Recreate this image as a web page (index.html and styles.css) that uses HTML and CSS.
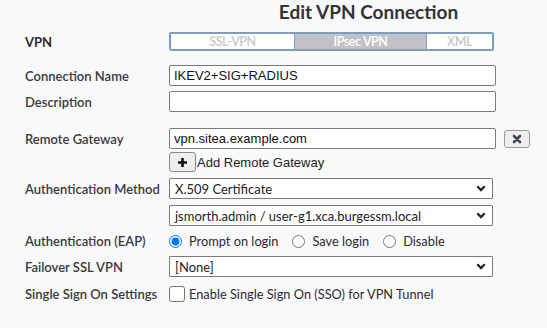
FILE: index.html
```html
<!doctype html>
<html lang="en">
  <head>
    <meta charset="UTF-8" />
    <meta name="viewport" content="width=device-width, initial-scale=1.0" />
    <title>Edit VPN Connection</title>
    <link rel="stylesheet" href="styles.css">
  </head>
  <body>
    <div class="page">
      <h1 class="title">Edit VPN Connection</h1>

      <div class="row row-vpn">
        <div class="label label-strong">VPN</div>
        <div class="segments">
          <span class="seg seg-ssl">SSL-VPN</span>
          <span class="seg seg-ipsec active">IPsec VPN</span>
          <span class="seg seg-xml">XML</span>
        </div>
      </div>

      <div class="row row-name">
        <div class="label">Connection Name</div>
        <input type="text" class="text-input" value="IKEV2+SIG+RADIUS" aria-label="Connection Name" />
      </div>

      <div class="row row-desc">
        <div class="label">Description</div>
        <input type="text" class="text-input" value="" aria-label="Description" />
      </div>

      <div class="row row-gateway">
        <div class="label">Remote Gateway</div>
        <div class="gateway">
          <input type="text" class="text-input" value="vpn.sitea.example.com" aria-label="Remote Gateway" />
          <button class="icon-btn remove-btn" aria-label="Remove">
            <svg width="10" height="10" viewBox="0 0 10 10">
              <path d="M2 2 L8 8 M8 2 L2 8" stroke="#3d4552" stroke-width="2.6" stroke-linecap="round" />
            </svg>
          </button>
        </div>
      </div>

      <div class="row row-add">
        <div class="label"></div>
        <div class="add-line">
          <button class="icon-btn add-btn" aria-label="Add">
            <svg width="11" height="11" viewBox="0 0 11 11">
              <path d="M5.5 1 V10 M1 5.5 H10" stroke="#111" stroke-width="2.6" />
            </svg>
          </button>
          <span class="add-text">Add Remote Gateway</span>
        </div>
      </div>

      <div class="row row-auth">
        <div class="label">Authentication Method</div>
        <div class="select">
          <span>X.509 Certificate</span>
          <svg class="chevron" width="10" height="7" viewBox="0 0 10 7">
            <path d="M1.3 1.3 L5 5 L8.7 1.3" fill="none" stroke="#222" stroke-width="2.3" />
          </svg>
        </div>
      </div>

      <div class="row row-cert">
        <div class="label"></div>
        <div class="select">
          <span>jsmorth.admin / user-g1.xca.burgessm.local</span>
          <svg class="chevron" width="10" height="7" viewBox="0 0 10 7">
            <path d="M1.3 1.3 L5 5 L8.7 1.3" fill="none" stroke="#222" stroke-width="2.3" />
          </svg>
        </div>
      </div>

      <div class="row row-eap">
        <div class="label">Authentication (EAP)</div>
        <div class="radios">
          <label class="radio"><input type="radio" name="eap" checked /> Prompt on login</label>
          <label class="radio"><input type="radio" name="eap" /> Save login</label>
          <label class="radio"><input type="radio" name="eap" /> Disable</label>
        </div>
      </div>

      <div class="row row-failover">
        <div class="label">Failover SSL VPN</div>
        <div class="select">
          <span>[None]</span>
          <svg class="chevron" width="10" height="7" viewBox="0 0 10 7">
            <path d="M1.3 1.3 L5 5 L8.7 1.3" fill="none" stroke="#222" stroke-width="2.3" />
          </svg>
        </div>
      </div>

      <div class="row row-sso">
        <div class="label">Single Sign On Settings</div>
        <label class="check"><input type="checkbox" /> Enable Single Sign On (SSO) for VPN Tunnel</label>
      </div>
    </div>
  </body>
</html>
```

FILE: styles.css
```css
body {
  margin: 0;
  background: #f8f9fb;
  font-family: Lato, 'Liberation Sans', sans-serif;
  color: #333;
  font-size: 13px;
}
.page {
  width: 547px;
  height: 328px;
  overflow: hidden;
}
.title {
  margin: 0 0 0 190px;
  font-size: 19px;
  line-height: 23px;
  font-weight: bold;
  text-align: center;
  color: #333;
}
.row {
  display: grid;
  grid-template-columns: 144px 1fr;
  align-items: center;
  padding-left: 25px;
}
.label {
  font-weight: 600;
  color: #3a3a3a;
  line-height: 16px;
}
.label-strong {
  font-weight: bold;
  color: #2a2a2a;
}
.row-vpn {
  margin-top: 9px;
}
.row-name {
  margin-top: 14px;
}
.row-desc {
  margin-top: 5px;
}
.row-gateway {
  margin-top: 16px;
}
.row-add {
  margin-top: 3px;
}
.row-auth {
  margin-top: 6px;
}
.row-cert {
  margin-top: 6px;
}
.row-eap {
  margin-top: 7px;
}
.row-failover {
  margin-top: 7px;
}
.row-sso {
  margin-top: 9px;
}
.segments {
  display: flex;
  width: 325px;
  height: 19px;
  box-sizing: border-box;
  border: 2px solid #7f9dbf;
  border-radius: 2px;
  background: #fff;
  font-weight: 600;
  font-size: 12.5px;
  letter-spacing: -0.4px;
}
.seg {
  display: flex;
  align-items: center;
  justify-content: center;
  color: #c8c8c8;
}
.seg-ssl {
  width: 123px;
  border-right: 1px solid #7f9dbf;
}
.seg-ipsec {
  width: 131px;
}
.seg-xml {
  flex: 1;
  border-left: 1px solid #7f9dbf;
}
.active {
  background: #c2c2c6;
  color: #fff;
}
.text-input {
  width: 327px;
  height: 21px;
  box-sizing: border-box;
  margin: 0;
  padding: 0 4px;
  border: 1px solid #7a7a7a;
  border-radius: 2px;
  background: #fff;
  font-family: 'Liberation Sans', Arial, sans-serif;
  font-size: 13px;
  color: #111;
}
.gateway {
  display: flex;
  align-items: center;
  gap: 8px;
}
.icon-btn {
  display: flex;
  align-items: center;
  justify-content: center;
  padding: 0;
  margin: 0;
  box-sizing: border-box;
  border: 1px solid #9a9a9a;
  border-radius: 3px;
  background: #eeeeee;
}
.remove-btn {
  width: 26px;
  height: 18px;
}
.add-btn {
  width: 27px;
  height: 20px;
  border-color: #8a8a8a;
}
.add-line {
  display: flex;
  align-items: center;
  gap: 1px;
}
.add-text {
  font-family: 'Liberation Sans', Arial, sans-serif;
  font-size: 13px;
  color: #222;
}
.select {
  display: flex;
  align-items: center;
  justify-content: space-between;
  width: 324px;
  height: 21px;
  box-sizing: border-box;
  padding: 0 6px 0 5px;
  border: 1px solid #7a7a7a;
  border-radius: 1px;
  background: #fff;
  color: #222;
}
.radios {
  display: flex;
  align-items: center;
  height: 16px;
}
.radio {
  display: flex;
  align-items: center;
  gap: 7px;
  margin-right: 14px;
  color: #2e2a33;
  font-size: 12.8px;
}
.radio input {
  margin: 0 0 0 0;
  width: 13px;
  height: 13px;
}
.check {
  display: flex;
  align-items: center;
  gap: 4px;
  color: #2e2a33;
  font-size: 12.8px;
}
.check input {
  appearance: none;
  margin: 0;
  width: 16px;
  height: 16px;
  box-sizing: border-box;
  border: 1px solid #767676;
  border-radius: 3px;
  background: #fff;
}
```
